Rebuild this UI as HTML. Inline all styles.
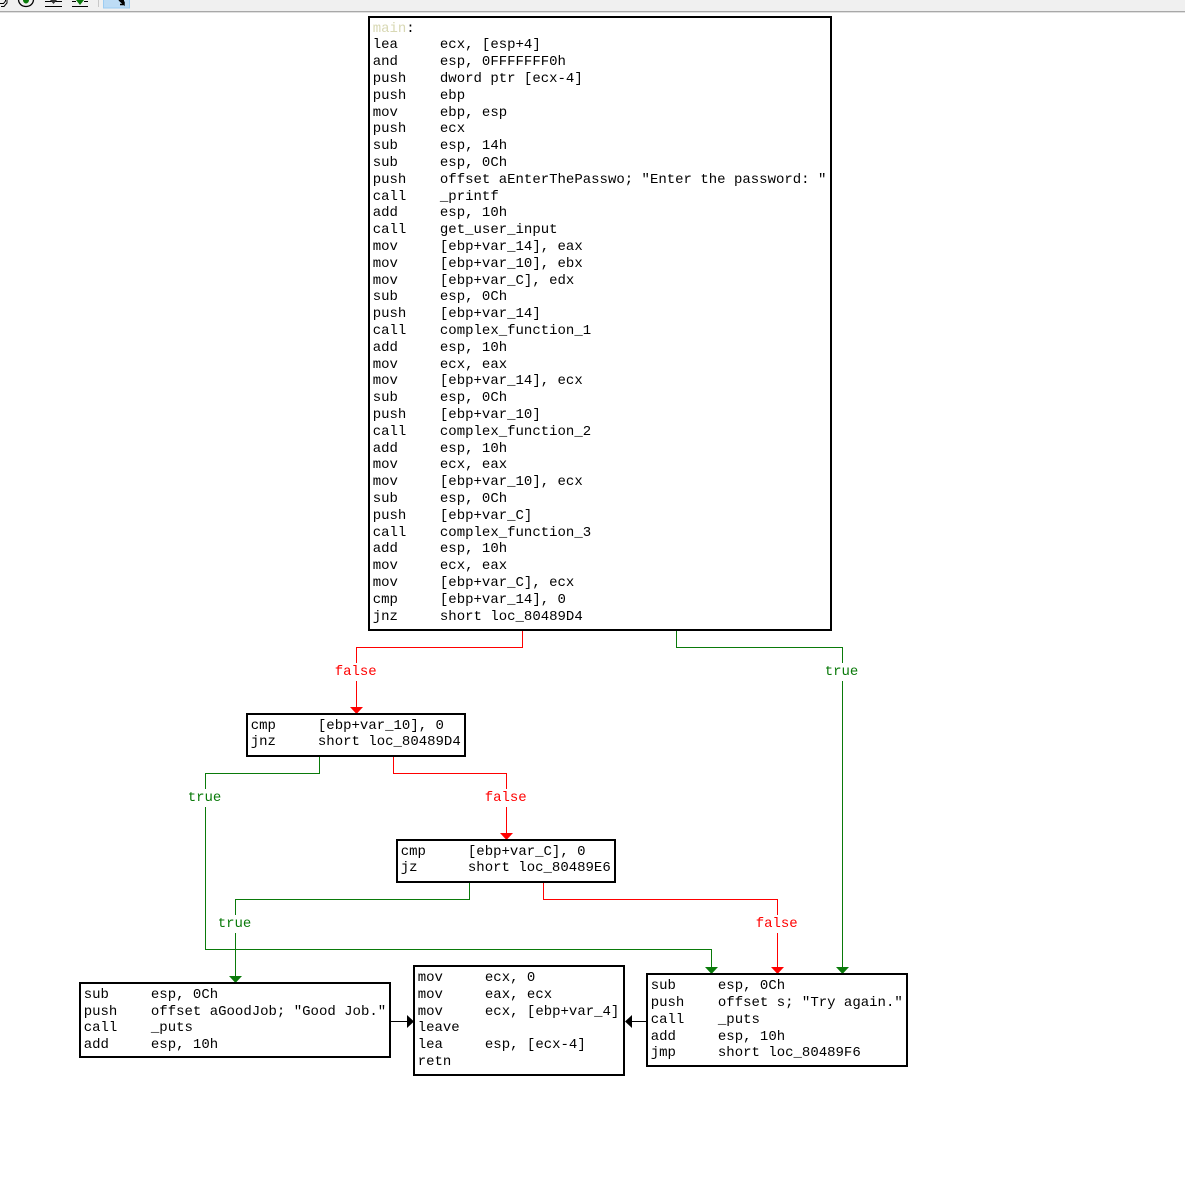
<!DOCTYPE html>
<html>
<head>
<meta charset="utf-8">
<style>
html,body{margin:0;padding:0;background:#fff;width:1185px;height:1187px;overflow:hidden}
svg{display:block}
text{font-family:"Liberation Mono",monospace;font-size:14px;white-space:pre;fill:#000;transform:translate(-.3px,-1px)}
.r{fill:#f00}.g{fill:#0a7a0a}
.b{fill:#fff;stroke:#000;stroke-width:2;shape-rendering:crispEdges}
.l{fill:none;stroke-width:1;shape-rendering:crispEdges}
</style>
</head>
<body>
<svg width="1185" height="1187" viewBox="0 0 1185 1187" xmlns="http://www.w3.org/2000/svg" xml:space="preserve">
<!-- toolbar -->
<rect x="0" y="0" width="1185" height="11" fill="#f0f0f0"/>
<rect x="0" y="11" width="1185" height="1" fill="#a8a8a8"/>
<rect x="0" y="12" width="1185" height="1" fill="#e0e0e0"/>
<path d="M0 3.500H3.500L5.500 1V0M1 6.500H4L7 3V0" fill="none" stroke="#000"/>
<path d="M18.500 0C19 4 22 6.500 26 6.500C30 6.500 33 4 33.500 0" fill="none" stroke="#000" stroke-width="1.300"/>
<path d="M23 0C23 2 24.500 3.500 26 3.500C27.500 3.500 29 2 29 0Z" fill="#0a7a0a"/>
<path d="M45 1.500H62M45 6.500H62" stroke="#000" stroke-width="1" fill="none"/>
<path d="M50 0H57L53.500 4Z" fill="#333"/>
<path d="M72 6.500H88" stroke="#000" fill="none"/>
<path d="M72 1.500H76M84 1.500H88" stroke="#000" fill="none"/>
<path d="M76 0H84L80 5Z" fill="#0a7a0a"/>
<rect x="98" y="0" width="1" height="7" fill="#c8c8c8"/>
<rect x="103.500" y="-1" width="26" height="9" fill="#bddcf5" stroke="#9cccf2"/>
<path d="M119 0L124 4.500V1.500M124 4.500H120" fill="none" stroke="#000" stroke-width="1.500"/>
<path d="M120 0H124V5Z" fill="#000"/>

<!-- edges -->
<path class="l" stroke="#f00" d="M522.500 630V647.500H356.500V708"/>
<path class="l" stroke="#0a7a0a" d="M676.500 630V647.500H842.500V967"/>
<path class="l" stroke="#f00" d="M393.500 756V773.500H506.500V834"/>
<path class="l" stroke="#0a7a0a" d="M319.500 756V773.500H205.500V949.500H711.500V967"/>
<path class="l" stroke="#0a7a0a" d="M469.500 882V899.500H235.500V976"/>
<path class="l" stroke="#f00" d="M543.500 882V899.500H777.500V967"/>
<path class="l" stroke="#000" d="M390 1021.500H408M647 1021.500H631"/>

<!-- arrows -->
<path d="M350 707H363L356.500 714Z" fill="#f00"/>
<path d="M500 833H513L506.500 840Z" fill="#f00"/>
<path d="M229 976H242L235.500 983Z" fill="#0a7a0a"/>
<path d="M705 967H718L711.500 974Z" fill="#0a7a0a"/>
<path d="M771 967H784L777.500 974Z" fill="#f00"/>
<path d="M836 967H849L842.500 974Z" fill="#0a7a0a"/>
<path d="M407 1015V1028L414 1021.500Z" fill="#000"/>
<path d="M632 1015V1028L625 1021.500Z" fill="#000"/>

<!-- label backgrounds -->
<rect x="334" y="663" width="44" height="18" fill="#fff"/>
<rect x="824" y="663" width="36" height="18" fill="#fff"/>
<rect x="187" y="789" width="36" height="18" fill="#fff"/>
<rect x="484" y="789" width="44" height="18" fill="#fff"/>
<rect x="217" y="915" width="36" height="18" fill="#fff"/>
<rect x="755" y="915" width="44" height="18" fill="#fff"/>

<!-- labels -->
<text class="r" x="335" y="676">false</text>
<text class="g" x="825" y="676">true</text>
<text class="g" x="188" y="802">true</text>
<text class="r" x="485" y="802">false</text>
<text class="g" x="218" y="928">true</text>
<text class="r" x="756" y="928">false</text>

<!-- main box -->
<rect class="b" x="369" y="17" width="462" height="613"/>
<text x="373" y="33"><tspan fill="#d8d8b4">main</tspan>:</text>
<text x="373" y="49">lea     ecx, [esp+4]</text>
<text x="373" y="66">and     esp, 0FFFFFFF0h</text>
<text x="373" y="83">push    dword ptr [ecx-4]</text>
<text x="373" y="100">push    ebp</text>
<text x="373" y="117">mov     ebp, esp</text>
<text x="373" y="133">push    ecx</text>
<text x="373" y="150">sub     esp, 14h</text>
<text x="373" y="167">sub     esp, 0Ch</text>
<text x="373" y="184">push    offset aEnterThePasswo; "Enter the password: "</text>
<text x="373" y="201">call    _printf</text>
<text x="373" y="217">add     esp, 10h</text>
<text x="373" y="234">call    get_user_input</text>
<text x="373" y="251">mov     [ebp+var_14], eax</text>
<text x="373" y="268">mov     [ebp+var_10], ebx</text>
<text x="373" y="285">mov     [ebp+var_C], edx</text>
<text x="373" y="301">sub     esp, 0Ch</text>
<text x="373" y="318">push    [ebp+var_14]</text>
<text x="373" y="335">call    complex_function_1</text>
<text x="373" y="352">add     esp, 10h</text>
<text x="373" y="369">mov     ecx, eax</text>
<text x="373" y="385">mov     [ebp+var_14], ecx</text>
<text x="373" y="402">sub     esp, 0Ch</text>
<text x="373" y="419">push    [ebp+var_10]</text>
<text x="373" y="436">call    complex_function_2</text>
<text x="373" y="453">add     esp, 10h</text>
<text x="373" y="469">mov     ecx, eax</text>
<text x="373" y="486">mov     [ebp+var_10], ecx</text>
<text x="373" y="503">sub     esp, 0Ch</text>
<text x="373" y="520">push    [ebp+var_C]</text>
<text x="373" y="537">call    complex_function_3</text>
<text x="373" y="553">add     esp, 10h</text>
<text x="373" y="570">mov     ecx, eax</text>
<text x="373" y="587">mov     [ebp+var_C], ecx</text>
<text x="373" y="604">cmp     [ebp+var_14], 0</text>
<text x="373" y="621">jnz     short loc_80489D4</text>

<!-- box 2 -->
<rect class="b" x="247" y="714" width="218" height="42"/>
<text x="251" y="730">cmp     [ebp+var_10], 0</text>
<text x="251" y="746">jnz     short loc_80489D4</text>

<!-- box 3 -->
<rect class="b" x="397" y="840" width="218" height="42"/>
<text x="401" y="856">cmp     [ebp+var_C], 0</text>
<text x="401" y="872">jz      short loc_80489E6</text>

<!-- left box -->
<rect class="b" x="80" y="983" width="310" height="74"/>
<text x="84" y="999">sub     esp, 0Ch</text>
<text x="84" y="1016">push    offset aGoodJob; "Good Job."</text>
<text x="84" y="1032">call    _puts</text>
<text x="84" y="1049">add     esp, 10h</text>

<!-- middle box -->
<rect class="b" x="414" y="966" width="210" height="109"/>
<text x="418" y="982">mov     ecx, 0</text>
<text x="418" y="999">mov     eax, ecx</text>
<text x="418" y="1016">mov     ecx, [ebp+var_4]</text>
<text x="418" y="1032">leave</text>
<text x="418" y="1049">lea     esp, [ecx-4]</text>
<text x="418" y="1066">retn</text>

<!-- right box -->
<rect class="b" x="647" y="974" width="260" height="92"/>
<text x="651" y="990">sub     esp, 0Ch</text>
<text x="651" y="1007">push    offset s; "Try again."</text>
<text x="651" y="1024">call    _puts</text>
<text x="651" y="1041">add     esp, 10h</text>
<text x="651" y="1057">jmp     short loc_80489F6</text>
</svg>
</body>
</html>
